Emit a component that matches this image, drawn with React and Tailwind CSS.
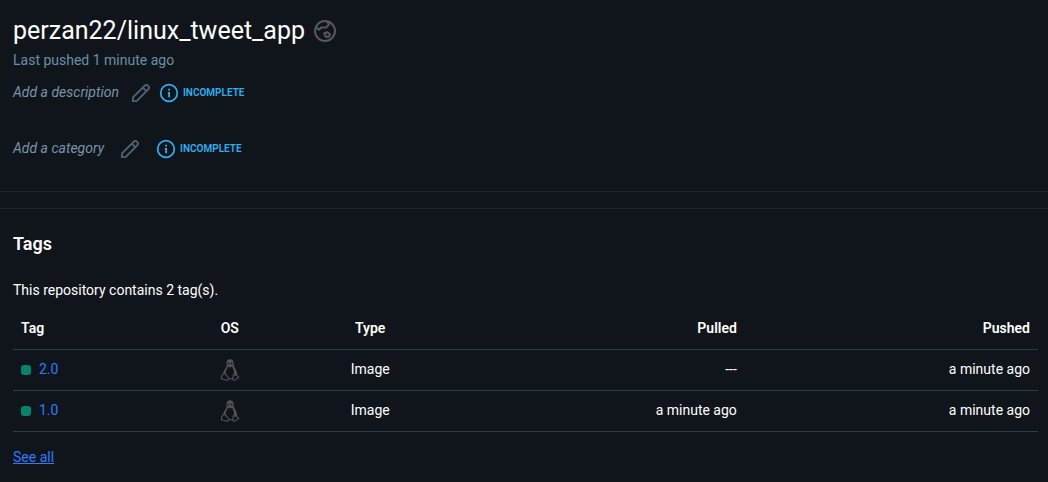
import React from "react";

function GlobeIcon() {
  return (
    <svg viewBox="0 0 24 24" className="size-6 text-[#55585c]" fill="none" stroke="currentColor" strokeWidth="2" strokeLinejoin="round" role="img" aria-label="Public">
      <circle cx="12" cy="12" r="10" />
      <path d="M3 8.4 L5.8 10.6 L8.6 8.4 L13.4 8.4 L15.8 5.6 L14.2 2.6" />
      <path d="M11.4 14 L14.4 13.2 L17 15.2 L16 17.6 L13.2 18 L11.8 16.2 Z" />
    </svg>
  );
}

function PencilIcon() {
  return (
    <svg viewBox="0 0 20 20" className="size-5" fill="none" stroke="currentColor" strokeWidth="1.8" strokeLinejoin="round" aria-hidden="true">
      <path d="M1.8 18.2 L2.2 14.2 L13.6 2.8 A2.5 2.5 0 0 1 17.2 6.4 L5.8 17.8 Z" />
      <path d="M11.8 4.6 L15.4 8.2" />
    </svg>
  );
}

function InfoIcon() {
  return (
    <svg viewBox="0 0 20 20" className="size-5" aria-hidden="true">
      <circle cx="10" cy="10" r="8.3" fill="none" stroke="currentColor" strokeWidth="1.7" />
      <path d="M9.1 5.8h1.9v1.8H9.1z M8.7 9h2.3v5.2H9.2V10.2h-.5z" fill="currentColor" />
    </svg>
  );
}

function LinuxIcon() {
  return (
    <svg viewBox="0 0 20 24" className="mx-auto h-6 w-5 text-[#515457]" fill="none" stroke="currentColor" strokeWidth="1.1" strokeLinejoin="round" role="img" aria-label="Linux">
      <path
        fill="currentColor"
        stroke="none"
        fillRule="evenodd"
        d="M10 1.2 C13 1.2 13.7 3.4 13.7 6 C13.7 9.6 17 11.6 17 16 L15.4 17 L14 16 C14.4 12.6 12.8 10.6 12.2 8.4 L10 9.4 L7.8 8.4 C7.4 10.8 5.4 12.4 5.6 15.8 L3.2 15.4 C3.4 12 6.4 10.4 6.5 7.4 C6.6 4.6 6.2 1.2 10 1.2 Z M7.7 5 V7 L9.2 6 V4.6 Z M10.8 4.6 V6 L12.4 6.8 V4.8 Z"
      />
      <path d="M3.8 15.6 L5.6 16.2 L8.6 20 C8.8 21.8 7.4 22.6 6 22 L1.4 20.8 L1.8 17.4 Z" />
      <path d="M13.4 16.4 L15 17.4 L16.6 16 L17 17.6 L18.8 19.2 L15.6 21.6 C13.8 23 12.4 22 12.9 20 Z" />
      <path d="M8.6 20.8 H13" />
    </svg>
  );
}

function EditableField({ label, labelGap, iconGap }) {
  return (
    <div className={"flex h-6 items-center " + iconGap}>
      <span className={"flex items-center " + labelGap}>
        <span className="pb-0.5 text-sm text-[#7794ab] italic">{label}</span>
        <button type="button" aria-label={label} className="text-[#4f6675]">
          <PencilIcon />
        </button>
      </span>
      <span className="flex items-center gap-1 text-[#2bb1f3]">
        <InfoIcon />
        <span className="text-[10px] font-semibold">INCOMPLETE</span>
      </span>
    </div>
  );
}

const tags = [
  { name: "2.0", type: "Image", pulled: "---", pushed: "a minute ago" },
  { name: "1.0", type: "Image", pulled: "a minute ago", pushed: "a minute ago" },
];

export default function App() {
  return (
    <main className="min-h-screen bg-[#10151b] font-['Roboto','Liberation_Sans',sans-serif] text-sm text-white">
      <header className="border-b border-[#1c262d] px-[13px] pt-4 pb-[30px]">
        <div className="flex h-[30px] items-center gap-2">
          <h1 className="text-[25px]">perzan22/linux_tweet_app</h1>
          <GlobeIcon />
        </div>
        <p className="mt-1 h-5 text-sm text-[#6990a8]">Last pushed 1 minute ago</p>
        <div className="mt-[11px] flex flex-col gap-8">
          <EditableField label="Add a description" labelGap="gap-3" iconGap="gap-2" />
          <EditableField label="Add a category" labelGap="gap-4" iconGap="gap-4" />
        </div>
      </header>

      <section className="mt-4 border-t border-[#1c262d] pt-[21px] pr-[10px] pl-[13px]">
        <h2 className="text-lg leading-7 font-semibold">Tags</h2>
        <p className="mt-[22px]">This repository contains 2 tag(s).</p>
        <table className="mt-2 w-full table-fixed border-separate border-spacing-0">
          <thead>
            <tr className="h-[42px] [&>th]:border-b [&>th]:border-[#2b3d4a] [&>th]:px-2 [&>th]:pb-0.5 [&>th]:font-semibold">
              <th scope="col" className="w-[14.3%] text-left">Tag</th>
              <th scope="col" className="w-[13.7%]">OS</th>
              <th scope="col" className="w-[13.7%]">Type</th>
              <th scope="col" className="w-[29.7%] text-right">Pulled</th>
              <th scope="col" className="w-[28.6%] text-right">Pushed</th>
            </tr>
          </thead>
          <tbody>
            {tags.map((tag) => (
              <tr key={tag.name} className="h-[41px] [&>td]:border-b [&>td]:border-[#2b3d4a] [&>td]:px-2">
                <td>
                  <div className="flex items-center gap-2">
                    <span className="size-[10px] rounded-[3px] bg-[#04846f]" />
                    <a href="#tag" className="pb-0.5 text-[#2a7cff]">{tag.name}</a>
                  </div>
                </td>
                <td><LinuxIcon /></td>
                <td className="pb-0.5 text-center">{tag.type}</td>
                <td className="pb-0.5 text-right">{tag.pulled}</td>
                <td className="pb-0.5 text-right">{tag.pushed}</td>
              </tr>
            ))}
          </tbody>
        </table>
        <a href="#tags" className="mt-[15px] inline-block text-[#2a7cff] underline">See all</a>
      </section>
    </main>
  );
}
